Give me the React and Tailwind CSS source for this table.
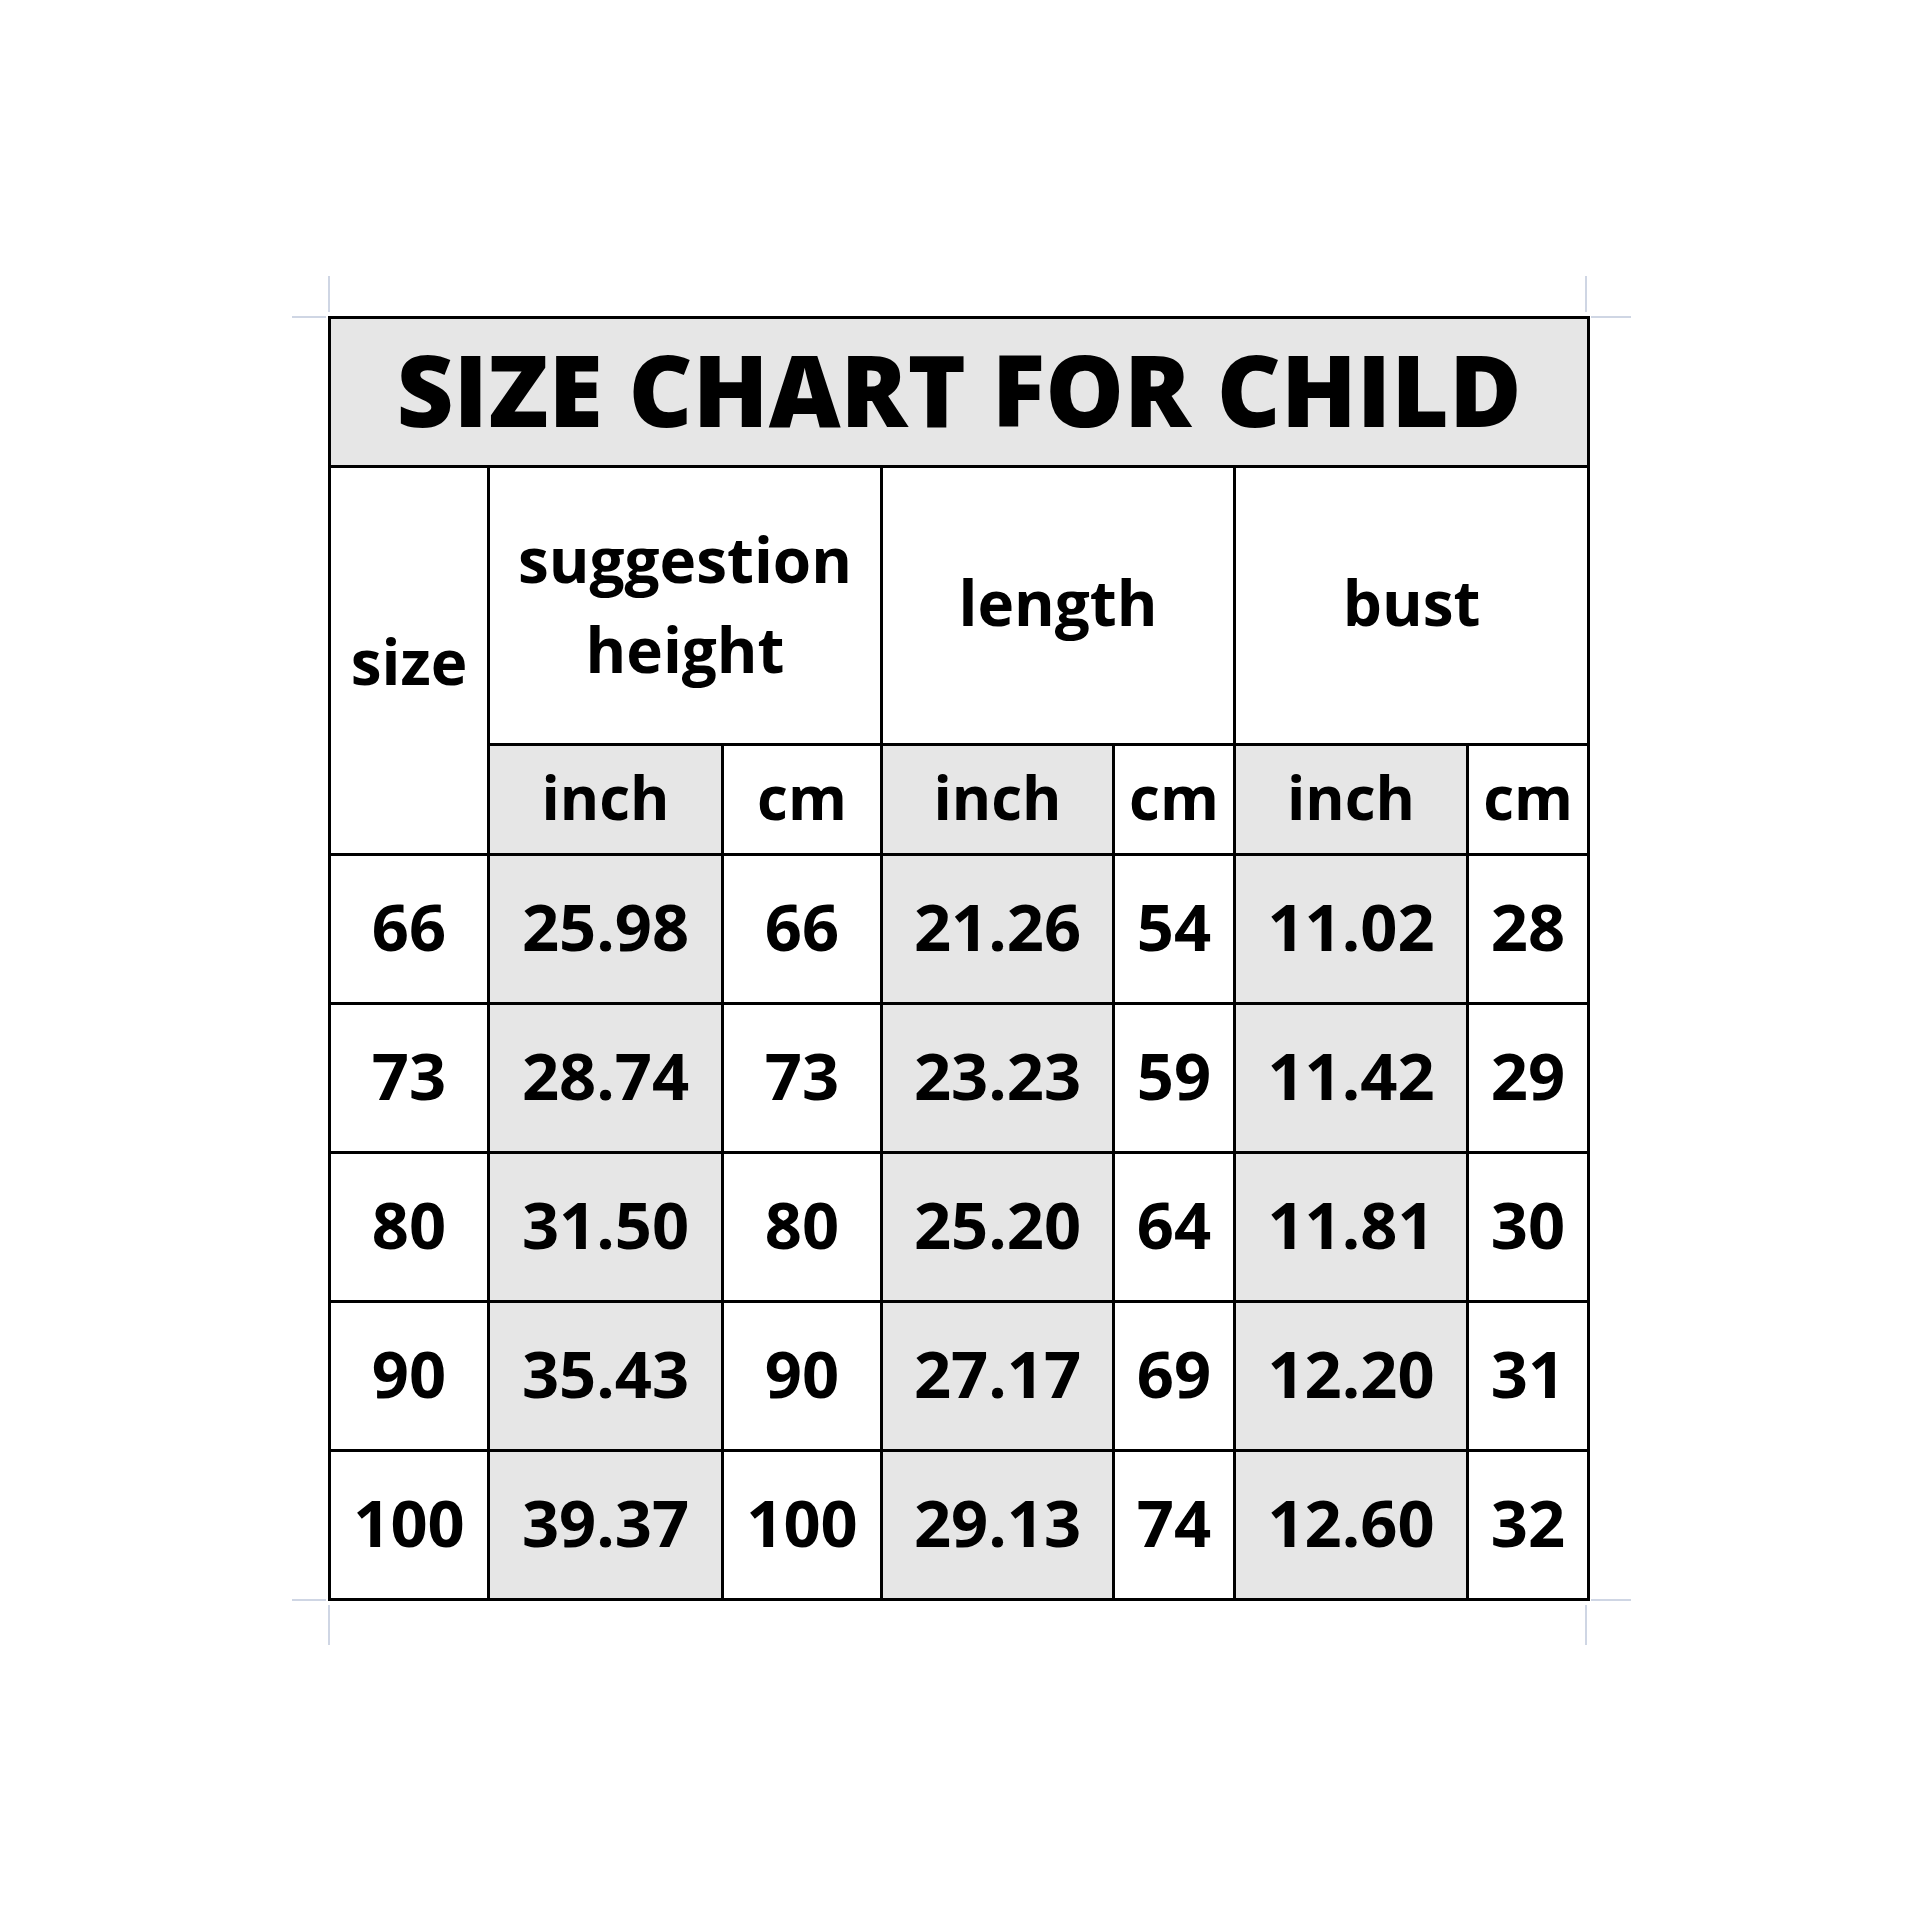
const rows = [
  ["66", "25.98", "66", "21.26", "54", "11.02", "28"],
  ["73", "28.74", "73", "23.23", "59", "11.42", "29"],
  ["80", "31.50", "80", "25.20", "64", "11.81", "30"],
  ["90", "35.43", "90", "27.17", "69", "12.20", "31"],
  ["100", "39.37", "100", "29.13", "74", "12.60", "32"],
];

const cell = "border-[3px] border-black text-center align-middle p-0";
const gray = "bg-[#e6e6e6]";
const mark = "bg-[#cfd6e4]";

export default function App() {
  return (
    <div className="w-[1920px] h-[1920px] bg-white pt-[276px] pl-[292px] font-['Open_Sans',sans-serif] font-bold text-black">
      <div className="grid grid-cols-[36px_1259px_44px] grid-rows-[40px_auto_44px]">
        {/* top crop marks */}
        <div />
        <div className="flex justify-between items-start">
          <div className={`${mark} w-[2px] h-[36px]`} />
          <div className={`${mark} w-[2px] h-[36px]`} />
        </div>
        <div />

        {/* left crop marks */}
        <div className="flex flex-col justify-between items-start">
          <div className={`${mark} w-[34px] h-[2px]`} />
          <div className={`${mark} w-[34px] h-[2px]`} />
        </div>

        <table className="w-[1259px] table-fixed border-collapse">
          <colgroup>
            <col className="w-[159px]" />
            <col className="w-[234px]" />
            <col className="w-[159px]" />
            <col className="w-[232px]" />
            <col className="w-[121px]" />
            <col className="w-[233px]" />
            <col className="w-[121px]" />
          </colgroup>
          <tbody>
            <tr className="h-[149px]">
              <td colSpan={7} className={`${cell} ${gray} text-[99px] font-extrabold leading-none pb-[8px]`}>
                SIZE CHART FOR CHILD
              </td>
            </tr>
            <tr className="h-[278px] text-[62px]">
              <td rowSpan={2} className={`${cell} leading-none`}>size</td>
              <td colSpan={2} className={`${cell} leading-[90px] pb-[4px]`}>
                suggestion
                <br />
                height
              </td>
              <td colSpan={2} className={`${cell} leading-none pb-[8px]`}>length</td>
              <td colSpan={2} className={`${cell} leading-none pb-[8px]`}>bust</td>
            </tr>
            <tr className="h-[110px] text-[60px] leading-none">
              <td className={`${cell} ${gray} pb-[6px]`}>inch</td>
              <td className={`${cell} pb-[6px]`}>cm</td>
              <td className={`${cell} ${gray} pb-[6px]`}>inch</td>
              <td className={`${cell} pb-[6px]`}>cm</td>
              <td className={`${cell} ${gray} pb-[6px]`}>inch</td>
              <td className={`${cell} pb-[6px]`}>cm</td>
            </tr>
            {rows.map((r) => (
              <tr key={r[0]} className="h-[149px] text-[65px] leading-none">
                {r.map((v, i) => (
                  <td key={i} className={`${cell} pb-[5px] ${i % 2 === 1 ? gray : ""}`}>
                    {v}
                  </td>
                ))}
              </tr>
            ))}
          </tbody>
        </table>

        {/* right crop marks */}
        <div className="flex flex-col justify-between items-end">
          <div className={`${mark} w-[40px] h-[2px]`} />
          <div className={`${mark} w-[40px] h-[2px]`} />
        </div>

        {/* bottom crop marks */}
        <div />
        <div className="flex justify-between items-end">
          <div className={`${mark} w-[2px] h-[40px]`} />
          <div className={`${mark} w-[2px] h-[40px]`} />
        </div>
        <div />
      </div>
    </div>
  );
}
